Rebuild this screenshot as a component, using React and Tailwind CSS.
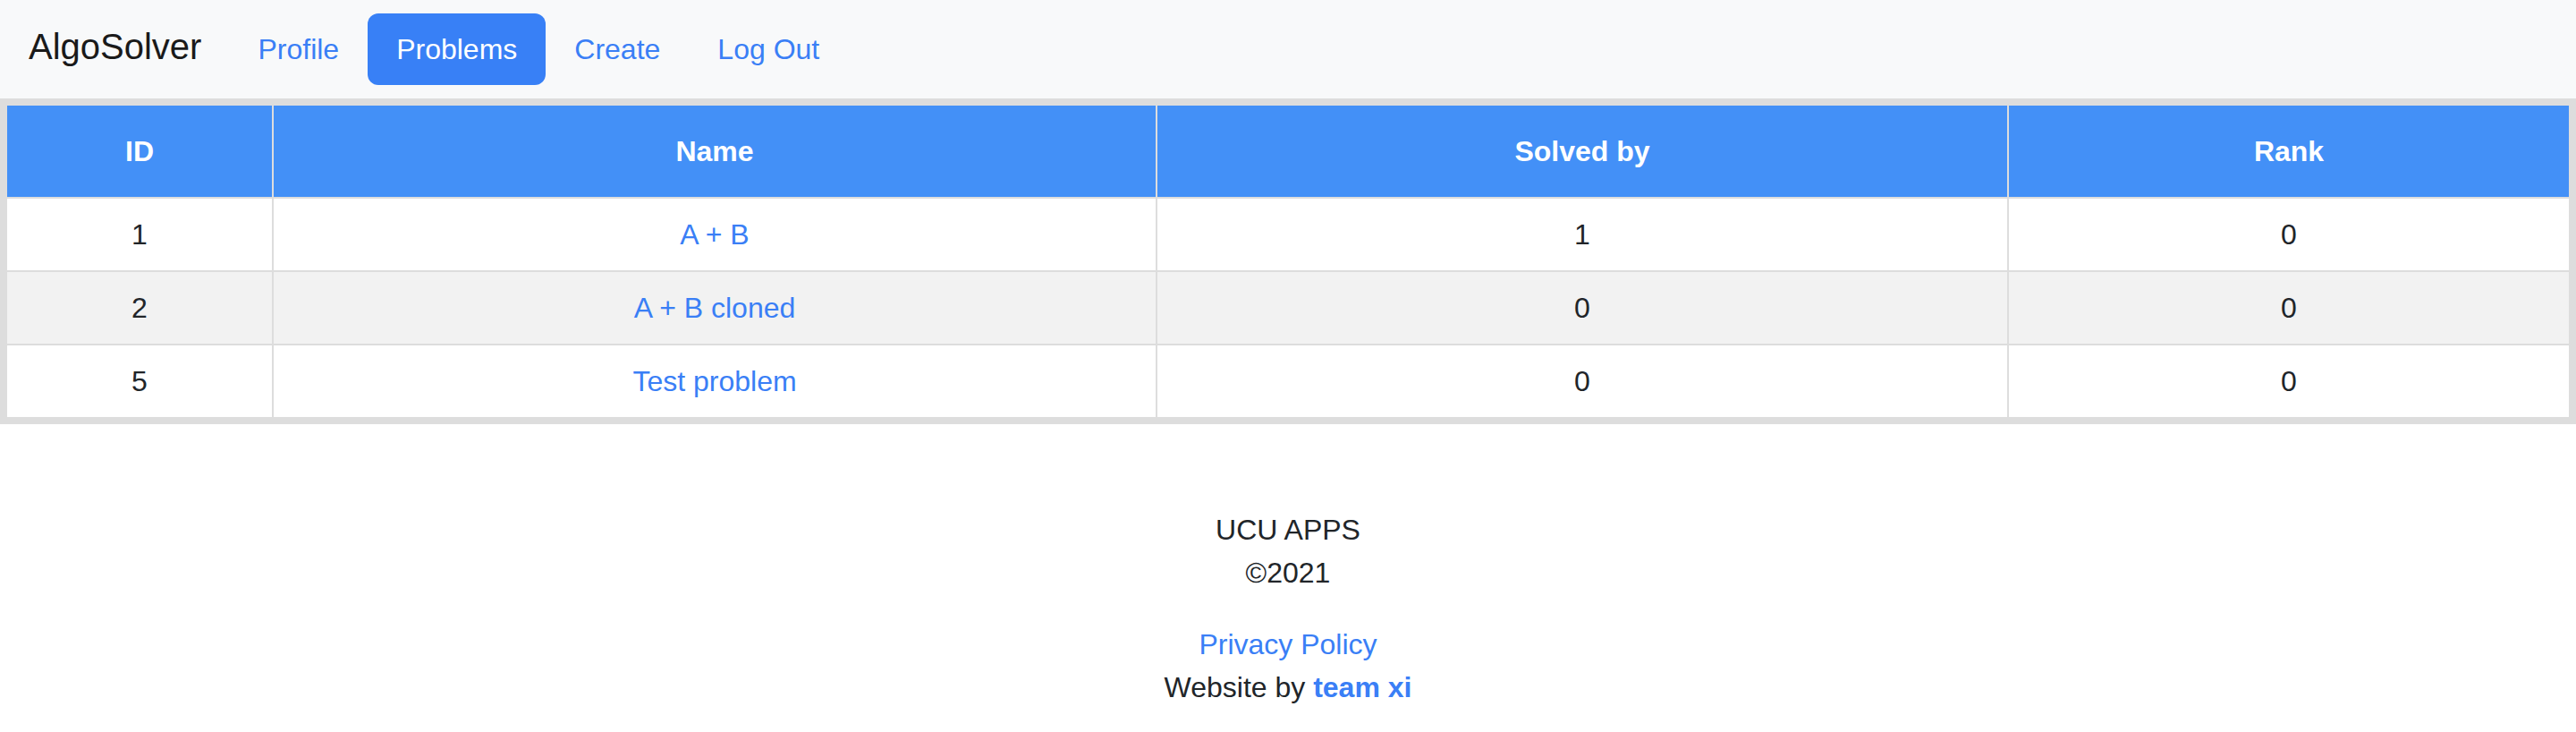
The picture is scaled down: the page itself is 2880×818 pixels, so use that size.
const problems = [
  { id: 1, name: 'A + B', solved: 1, rank: 0 },
  { id: 2, name: 'A + B cloned', solved: 0, rank: 0 },
  { id: 5, name: 'Test problem', solved: 0, rank: 0 },
]

const NavLink = ({ children, active }) => (
  <a
    href="#"
    className={
      active
        ? 'px-8 py-4 leading-[48px] rounded-xl bg-[#3880f6] text-white'
        : 'px-8 py-4 leading-[48px] text-[#3a7ff6]'
    }
  >
    {children}
  </a>
)

const App = () => {
  return (
    <div className="min-h-[818px] bg-white text-[#212529] font-['Liberation_Sans',Arial,sans-serif] text-[32px]">
      {/* Navbar */}
      <nav className="h-[110px] bg-[#f8f9fa] flex items-center px-8">
        <a href="#" className="text-[40px] leading-[60px] text-[#1a1a1a] mr-[31px] mb-[6px]">
          AlgoSolver
        </a>
        <NavLink>Profile</NavLink>
        <NavLink active>Problems</NavLink>
        <NavLink>Create</NavLink>
        <NavLink>Log Out</NavLink>
      </nav>

      {/* Problems table */}
      <div className="bg-[#dddddd] p-[6px]">
        <div className="grid grid-cols-[296fr_986fr_950fr_626fr] gap-[2px] p-[2px]">
          {['ID', 'Name', 'Solved by', 'Rank'].map((h) => (
            <div key={h} className="h-[102px] bg-[#4390f7] text-white font-bold flex items-center justify-center">
              {h}
            </div>
          ))}
          {problems.map((p, i) => {
            const bg = i % 2 === 1 ? 'bg-[#f2f2f2]' : 'bg-white'
            return [
              <div key={p.id + 'a'} className={`h-[80px] ${bg} flex items-center justify-center`}>{p.id}</div>,
              <div key={p.id + 'b'} className={`h-[80px] ${bg} flex items-center justify-center`}>
                <a href="#" className="text-[#3a7ff6]">{p.name}</a>
              </div>,
              <div key={p.id + 'c'} className={`h-[80px] ${bg} flex items-center justify-center`}>{p.solved}</div>,
              <div key={p.id + 'd'} className={`h-[80px] ${bg} flex items-center justify-center`}>{p.rank}</div>,
            ]
          })}
        </div>
      </div>

      {/* Footer */}
      <footer className="pt-[94px] text-center leading-[48px]">
        <p>UCU APPS</p>
        <p>©2021</p>
        <p className="mt-8">
          <a href="#" className="text-[#3a7ff6]">Privacy Policy</a>
        </p>
        <p>
          Website by <a href="#" className="text-[#3a7ff6] font-bold">team xi</a>
        </p>
      </footer>
    </div>
  )
}

export default App
